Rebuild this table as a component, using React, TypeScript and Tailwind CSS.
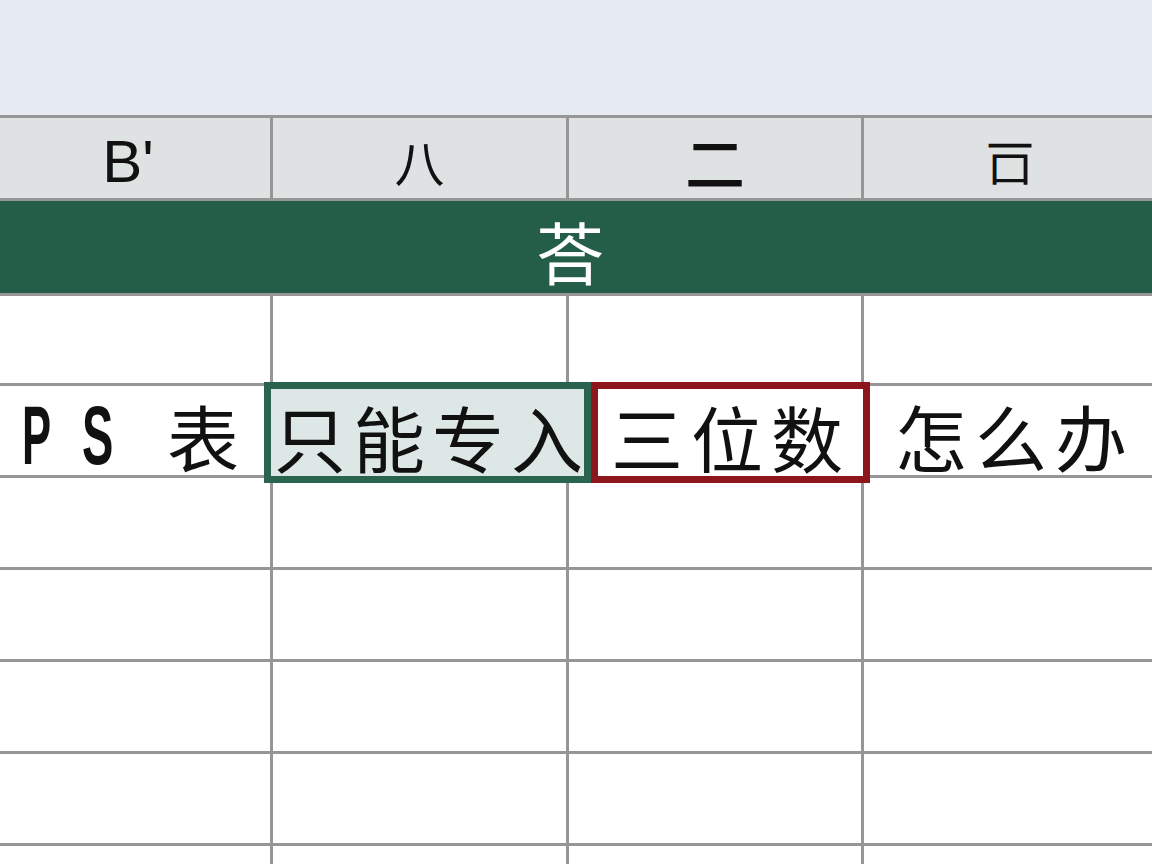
const cjk = "font-['Noto_Sans_CJK_SC','Noto_Sans_CJK_JP',sans-serif]";
const latin = "font-['Liberation_Sans',Arial,sans-serif]";

const lowerRows = [3, 4, 5, 6, 7];

function HeaderCell({ children, className = '' }: { children: React.ReactNode; className?: string }) {
  return (
    <div className={`flex h-[80px] items-center justify-center bg-[#dfe2e3] font-medium text-[#111] ${className}`}>
      {children}
    </div>
  );
}

export default function App() {
  return (
    <div className={`relative h-[864px] w-[1152px] overflow-hidden bg-white ${cjk}`}>
      <div className="h-[115px] bg-[#e6eaf1]" />

      <div className="grid grid-cols-[270px_293px_292px_1fr] gap-[3px] bg-[#969696] pt-[3px]">
        {/* column header */}
        <HeaderCell className="pr-[14px] pt-[7px]">
          <span className={`${latin} text-[60px] font-normal leading-none`}>B'</span>
        </HeaderCell>
        <HeaderCell className="pt-[4px]">
          <span className="text-[50px] font-normal leading-none">八</span>
        </HeaderCell>
        <HeaderCell className="pt-[6px]">
          <span className="text-[60px] leading-none">二</span>
        </HeaderCell>
        <HeaderCell className="pl-[4px] pt-[4px]">
          <span className="text-[48px] leading-none">𠮛</span>
        </HeaderCell>

        {/* merged title row */}
        <div className="col-span-4 flex h-[92px] items-center justify-center bg-[#255e48] pr-[12px] pt-[8px]">
          <span className="text-[68px] leading-none text-white">荅</span>
        </div>

        {/* row 1 */}
        {[0, 1, 2, 3].map((i) => (
          <div key={`r1-${i}`} className="h-[87px] bg-white" />
        ))}

        {/* row 2 */}
        <div className="flex h-[89px] items-center bg-white pl-[22px] pt-[8px] text-[#111]">
          <span className="w-[60px]">
            <span className={`${latin} inline-block origin-left scale-x-[0.52] text-[84px] font-bold leading-none`}>P</span>
          </span>
          <span className="w-[85px]">
            <span className={`${latin} inline-block origin-left scale-x-[0.56] text-[84px] font-bold leading-none`}>S</span>
          </span>
          <span className="text-[72px] leading-none">表</span>
        </div>
        <div className="h-[89px] bg-white" />
        <div className="h-[89px] bg-white" />
        <div className="flex h-[89px] items-center bg-white pl-[31px] pt-[8px] text-[#111]">
          <span className="whitespace-nowrap text-[72px] leading-none tracking-[8px]">怎么办</span>
        </div>

        {/* remaining empty rows */}
        {lowerRows.map((r) =>
          [0, 1, 2, 3].map((i) => (
            <div key={`r${r}-${i}`} className="h-[89px] bg-white" />
          ))
        )}
      </div>

      {/* selected cell */}
      <div className="absolute left-[264px] top-[382px] flex h-[101px] w-[327px] items-center border-[7px] border-[#2a634e] bg-[#dde7e5] pl-[3px] pt-[7px] text-[#111]">
        <span className="whitespace-nowrap text-[72px] leading-none tracking-[7px]">只能专入</span>
      </div>

      {/* error-marked cell */}
      <div className="absolute left-[591px] top-[382px] flex h-[101px] w-[279px] items-center border-[7px] border-[#8c161b] bg-white pl-[13px] pt-[7px] text-[#111]">
        <span className="whitespace-nowrap text-[72px] leading-none tracking-[8px]">三位数</span>
      </div>
    </div>
  );
}
